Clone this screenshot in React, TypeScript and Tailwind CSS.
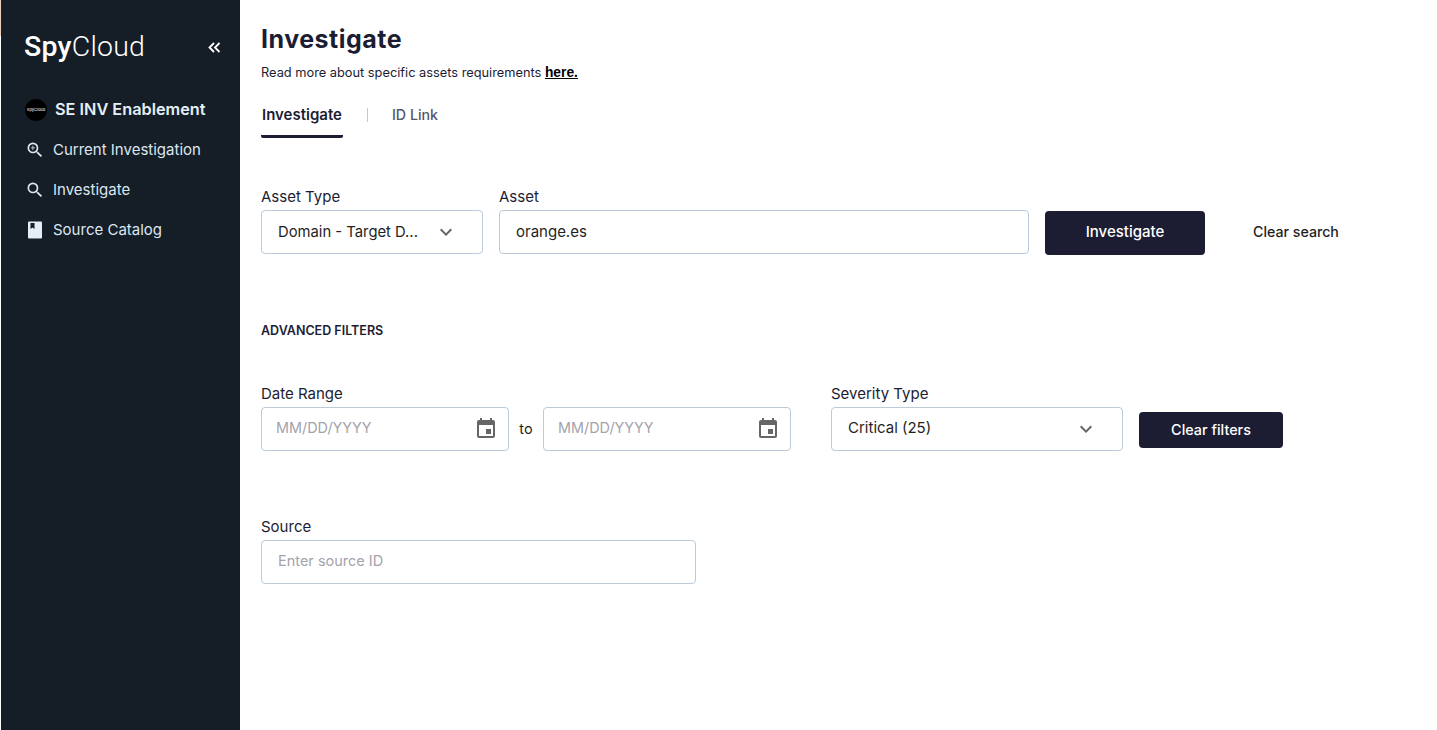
import { MdEvent, MdKeyboardArrowDown, MdOutlineSearch, MdOutlineZoomIn } from 'react-icons/md'

function Label({ children }: { children: React.ReactNode }) {
  return <div className="text-[15px] leading-[20px] text-[#1c1d33] pt-px mb-[3px]">{children}</div>
}

function DateInput() {
  return (
    <div className="w-[248px] h-[44px] border border-[#bccbd9] rounded-[4px] flex items-center justify-between pl-[14px] pr-[10px]">
      <span className="text-[14.4px] text-[#a3a3ab] pb-[2px]">MM/DD/YYYY</span>
      <MdEvent className="text-[24px] text-[#666666]" />
    </div>
  )
}

function NavItem({ icon, label }: { icon: React.ReactNode; label: string }) {
  return (
    <div className="h-[40px] flex items-center text-[15px] text-[#dce6ef]">
      <div className="w-[28px] flex items-center">{icon}</div>
      {label}
    </div>
  )
}

export default function App() {
  return (
    <div className="flex h-[730px] bg-white font-['Inter',sans-serif] overflow-hidden">
      <div className="w-px shrink-0">
        <div className="h-[36px] bg-[#f0cdbd]" />
      </div>
      <aside className="w-[239px] bg-[#151d27] shrink-0 pl-[24px] pr-[16px]">
        <div className="flex items-start justify-between pt-[28px] h-[70px]">
          <div className="-ml-[1px] text-[28.5px] leading-[38px] text-white font-['Roboto',sans-serif] tracking-[0.2px]">
            <span className="font-medium">Spy</span>
            <span className="font-light">Cloud</span>
          </div>
          <svg width="20" height="20" viewBox="0 0 20 20" fill="none" stroke="#ffffff" strokeWidth="1.8" className="mt-[10px]">
            <path d="M10 5 5.500 9.500 10 14" />
            <path d="M15.500 5 11 9.500 15.500 14" />
          </svg>
        </div>
        <div className="flex items-center h-[40px] mt-[20px]">
          <div className="w-[22px] h-[22px] rounded-full bg-black flex items-center justify-center text-[4px] text-white mr-[8px]">
            SpyCloud
          </div>
          <span className="text-[16.3px] font-semibold text-[#e6eff7] pb-[2px]">SE INV Enablement</span>
        </div>
        <NavItem icon={<MdOutlineZoomIn className="text-[20px] text-[#dce6ef]" />} label="Current Investigation" />
        <NavItem icon={<MdOutlineSearch className="text-[20px] text-[#dce6ef]" />} label="Investigate" />
        <NavItem
          icon={
            <svg width="20" height="20" viewBox="0 0 20 20">
              <path d="M3 2.5A1 1 0 0 1 4 1.500h12a1 1 0 0 1 1 1v15a1 1 0 0 1-1 1H4a1 1 0 0 1-1-1z" fill="#e3eef8" />
              <path d="M5.500 3h4v6L7.500 7.500 5.500 9z" fill="#151d27" />
            </svg>
          }
          label="Source Catalog"
        />
      </aside>

      <main className="flex-1 pl-[21px]">
        <h1 className="text-[25px] leading-[32px] font-bold tracking-[0.5px] text-[#1c1d33] mt-[23px]">Investigate</h1>
        <p className="text-[12.8px] leading-[18px] text-[#1c1d33] mt-[9px]">
          Read more about specific assets requirements{' '}
          <a className="text-[13.8px] font-bold underline text-black font-['Liberation_Sans',sans-serif]">here.</a>
        </p>

        <div className="flex items-start mt-[9px] h-[47px]">
          <div className="w-[82px] h-[47px] border-b-[3px] border-[#1c1d33] rounded-b-[2px] flex justify-center pt-[13px] text-[15px] font-semibold text-[#1c1d33]">
            Investigate
          </div>
          <div className="w-px h-[14px] bg-[#bccbd9] mt-[17px] ml-[24px]" />
          <div className="ml-[24px] pt-[13px] text-[14.2px] font-medium text-[#55566b]">ID Link</div>
        </div>

        <div className="flex mt-[48px]">
          <div className="w-[222px] mr-[16px]">
            <Label>Asset Type</Label>
            <div className="h-[44px] border border-[#bccbd9] rounded-[4px] flex items-center justify-between pl-[16px] pr-[24px] text-[14.8px] text-[#1f1f24]">
              <span>Domain - Target D...</span>
              <MdKeyboardArrowDown className="text-[24px] text-[#666666]" />
            </div>
          </div>
          <div className="w-[530px] mr-[16px]">
            <Label>Asset</Label>
            <div className="h-[44px] border border-[#bccbd9] rounded-[4px] flex items-center pl-[16px] text-[15px] text-[#1f1f24]">
              orange.es
            </div>
          </div>
          <div className="self-end flex items-center">
            <button className="w-[160px] h-[44px] rounded-[4px] bg-[#1c1d33] text-white text-[15px] font-medium -mb-[1px] pb-px">
              Investigate
            </button>
            <button className="ml-[48px] text-[14.2px] font-medium text-[#1f1f24] mb-[2px]">Clear search</button>
          </div>
        </div>

        <div className="text-[12.5px] leading-[16px] font-semibold text-[#1c1d33] mt-[69px]">ADVANCED FILTERS</div>

        <div className="flex mt-[44px]">
          <div>
            <Label>Date Range</Label>
            <div className="flex items-center">
              <DateInput />
              <span className="w-[34px] text-center text-[14.5px] text-[#1f1f24]">to</span>
              <DateInput />
            </div>
          </div>
          <div className="w-[292px] ml-[40px]">
            <Label>Severity Type</Label>
            <div className="h-[44px] border border-[#bccbd9] rounded-[4px] flex items-center justify-between pl-[16px] pr-[24px] text-[15px] text-[#1f1f24]">
              <span className="pb-px">Critical (25)</span>
              <MdKeyboardArrowDown className="text-[24px] text-[#666666]" />
            </div>
          </div>
          <button className="self-end w-[144px] h-[36px] mb-[3px] ml-[16px] rounded-[4px] bg-[#1c1d33] text-white text-[14.4px] font-medium">
            Clear filters
          </button>
        </div>

        <div className="w-[435px] mt-[65px]">
          <Label>Source</Label>
          <div className="h-[44px] border border-[#bccbd9] rounded-[4px] flex items-center pl-[16px] pb-[2px] text-[14.5px] text-[#a3a3ab]">
            Enter source ID
          </div>
        </div>
      </main>
    </div>
  )
}
